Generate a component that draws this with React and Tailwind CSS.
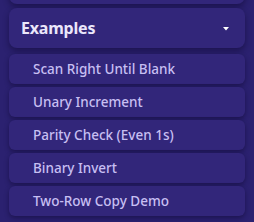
const examples = [
  'Scan Right Until Blank',
  'Unary Increment',
  'Parity Check (Even 1s)',
  'Binary Invert',
  'Two-Row Copy Demo',
];

export default function App() {
  return (
    <div
      className="w-[254px] h-[222px] overflow-hidden bg-[#2b2170] px-[9px] flex flex-col"
      style={{ fontFamily: '"Noto Sans", "DejaVu Sans", sans-serif' }}
    >
      {/* previous panel, mostly scrolled off */}
      <div className="-mt-[30px] h-[34px] shrink-0 rounded-lg bg-[#32267a] shadow-[0_3px_6px_rgba(10,5,40,0.45)]" />

      {/* Examples header */}
      <div className="mt-[4px] h-[40px] shrink-0 rounded-lg bg-[#32267a] shadow-[0_3px_6px_rgba(10,5,40,0.45)] flex items-center justify-between pl-[12px] pr-[16px]">
        <span className="text-[16px] font-bold text-[#ebe7fb] tracking-[-0.2px]">Examples</span>
        <svg width="6" height="4" viewBox="0 0 6 4" className="mt-[1px]">
          <path d="M0 0h6L3 3.5z" fill="#ffffff" />
        </svg>
      </div>

      {/* Example list */}
      <div className="mt-[6px] flex flex-col gap-[3px]">
        {examples.map((name) => (
          <div
            key={name}
            className="h-[30px] shrink-0 rounded-md bg-[#32267a] shadow-[0_2px_5px_rgba(10,5,40,0.45)] flex items-center pl-[24px]"
          >
            <span className="text-[13.5px] font-medium text-[#c7bff2]">{name}</span>
          </div>
        ))}
      </div>
    </div>
  );
}
